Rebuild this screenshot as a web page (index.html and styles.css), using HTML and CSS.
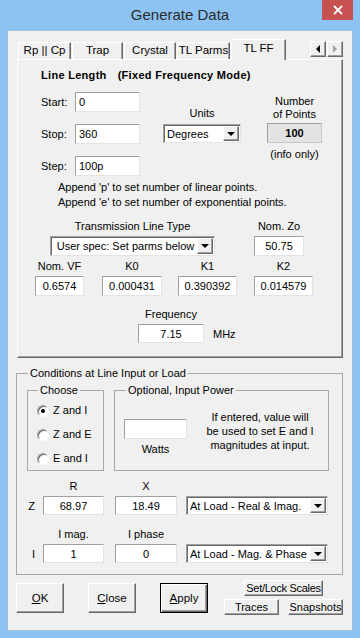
FILE: index.html
```html
<!DOCTYPE html>
<html lang="en">
<head>
    <meta charset="UTF-8">
    <meta name="viewport" content="width=device-width, initial-scale=1.0">
    <title>Generate Data</title>
    <link rel="stylesheet" href="styles.css">
</head>
<body>
    <div class="window">
        <div class="titlebar">
            <div class="title">Generate Data</div>
            <div class="close">
                <svg width="10" height="10" viewBox="0 0 10 10"><path d="M1 1 L9 9 M9 1 L1 9" stroke="#fff" stroke-width="1.8"/></svg>
            </div>
        </div>
        <div class="client">
            <div class="tabs">
                <div class="tab w1">Rp || Cp</div>
                <div class="tab w2">Trap</div>
                <div class="tab w3">Crystal</div>
                <div class="tab w4">TL Parms</div>
                <div class="tab active">TL FF</div>
                <div class="spin">
                    <div class="spin-btn"><span class="tri-left"></span></div>
                    <div class="spin-btn"><span class="tri-right"></span></div>
                </div>
            </div>

            <div class="panel">
                <div class="heading">Line Length<span class="sub">(Fixed Frequency Mode)</span></div>
                <div class="range">
                    <div class="fields">
                        <div class="field"><label>Start:</label><input class="tb" value="0"></div>
                        <div class="field"><label>Stop:</label><input class="tb" value="360"></div>
                        <div class="field"><label>Step:</label><input class="tb" value="100p"></div>
                    </div>
                    <div class="units">
                        <div class="cap">Units</div>
                        <div class="combo units-combo"><span class="combo-val">Degrees</span><span class="combo-btn"><span class="tri-down"></span></span></div>
                    </div>
                    <div class="npoints">
                        <div class="cap">Number<br>of Points</div>
                        <div class="count">100</div>
                        <div class="info">(info only)</div>
                    </div>
                </div>
                <div class="notes">Append 'p' to set number of linear points.<br>Append 'e' to set number of exponential points.</div>
                <div class="tl-row">
                    <div class="tl-type">
                        <div class="cap">Transmission Line Type</div>
                        <div class="combo"><span class="combo-val centered">User spec: Set parms below</span><span class="combo-btn"><span class="tri-down"></span></span></div>
                    </div>
                    <div class="zo">
                        <div class="cap">Nom. Zo</div>
                        <input class="tb num" value="50.75">
                    </div>
                </div>
                <div class="k-row">
                    <div class="kcol vf"><div class="cap">Nom. VF</div><input class="tb num" value="0.6574"></div>
                    <div class="kcol k0"><div class="cap">K0</div><input class="tb num" value="0.000431"></div>
                    <div class="kcol k1"><div class="cap">K1</div><input class="tb num" value="0.390392"></div>
                    <div class="kcol k2"><div class="cap">K2</div><input class="tb num" value="0.014579"></div>
                </div>
                <div class="freq">
                    <div class="cap freq-cap">Frequency</div>
                    <div class="freq-line"><input class="tb num" value="7.15"><span class="unit">MHz</span></div>
                </div>
            </div>

            <fieldset class="group conditions">
                <legend>Conditions at Line Input or Load</legend>
                <div class="cond-inner">
                    <div class="subgroups">
                        <fieldset class="group choose">
                            <legend>Choose</legend>
                            <div class="choose-inner">
                                <div class="radio-row"><span class="radio on"></span>Z and I</div>
                                <div class="radio-row"><span class="radio"></span>Z and E</div>
                                <div class="radio-row"><span class="radio"></span>E and I</div>
                            </div>
                        </fieldset>
                        <fieldset class="group optional">
                            <legend>Optional, Input Power</legend>
                            <div class="optional-inner">
                                <div class="watts">
                                    <input class="tb num" value="">
                                    <div class="cap">Watts</div>
                                </div>
                                <div class="hint">If entered, value will<br>be used to set E and I<br>magnitudes at input.</div>
                            </div>
                        </fieldset>
                    </div>
                    <div class="pair-caps first">
                        <span class="letter"></span><span class="pc c1">R</span><span class="pc c2">X</span>
                    </div>
                    <div class="pair">
                        <span class="letter">Z</span>
                        <input class="tb num c1" value="68.97">
                        <input class="tb num c2" value="18.49">
                        <div class="combo c3"><span class="combo-val">At Load - Real &amp; Imag.</span><span class="combo-btn"><span class="tri-down"></span></span></div>
                    </div>
                    <div class="pair-caps">
                        <span class="letter"></span><span class="pc c1">I mag.</span><span class="pc c2">I phase</span>
                    </div>
                    <div class="pair">
                        <span class="letter">I</span>
                        <input class="tb num c1" value="1">
                        <input class="tb num c2" value="0">
                        <div class="combo c3"><span class="combo-val">At Load - Mag. &amp; Phase</span><span class="combo-btn"><span class="tri-down"></span></span></div>
                    </div>
                </div>
            </fieldset>

            <div class="buttons">
                <div class="btn big"><u>O</u>K</div>
                <div class="btn big"><u>C</u>lose</div>
                <div class="btn big default"><u>A</u>pply</div>
                <div class="side">
                    <div class="btn small scales">Set/Lock Scales</div>
                    <div class="side-row">
                        <div class="btn small half">Traces</div>
                        <div class="btn small half">Snapshots</div>
                    </div>
                </div>
            </div>
        </div>
    </div>
</body>
</html>
```

FILE: styles.css
```css
* {
    box-sizing: border-box;
}
body {
    margin: 0;
    background-color: #8cc3f3;
    font-family: 'Liberation Sans', Arial, sans-serif;
    font-size: 11px;
    color: #000;
}
.window {
    width: 360px;
    height: 638px;
    display: flex;
    flex-direction: column;
}
.titlebar {
    height: 31px;
    display: grid;
    grid-template-columns: 1fr auto 1fr;
    align-items: start;
}
.title {
    grid-column: 2;
    font-size: 15px;
    line-height: 18px;
    padding-top: 6px;
    color: #2b2b2b;
}
.close {
    grid-column: 3;
    justify-self: end;
    margin-right: 7px;
    width: 31px;
    height: 20px;
    background-color: #c75050;
    display: flex;
    align-items: center;
    justify-content: center;
}
.client {
    margin: 0 8px 8px;
    flex: 1;
    background-color: #f0f0f0;
    box-shadow: 0 0 0 1px #a3c2df;
}

/* tabs */
.tabs {
    height: 28px;
    display: flex;
    align-items: flex-end;
    padding: 0 9px 0 10px;
}
.tab {
    height: 17px;
    margin-right: 1px;
    background-color: #f0f0f0;
    border-top: 1px solid #fff;
    border-left: 1px solid #fff;
    border-right: 1px solid #696969;
    box-shadow: inset -1px 0 0 #a0a0a0;
    text-align: center;
    line-height: 15px;
    font-size: 11.5px;
}
.w1 { width: 53px; }
.w2 { width: 51px; }
.w3 { width: 52px; }
.w4 { width: 53px; }
.tab.active {
    width: 55px;
    height: 21px;
    margin-right: 0;
    margin-bottom: -1px;
    position: relative;
    z-index: 1;
    line-height: 16px;
}
.spin {
    margin-left: auto;
    margin-bottom: 2px;
    display: flex;
}
.spin-btn {
    width: 16px;
    height: 16px;
    margin-left: 1px;
    background-color: #f0f0f0;
    border: 1px solid;
    border-color: #fff #696969 #696969 #fff;
    box-shadow: inset -1px -1px 0 #a0a0a0;
    display: flex;
    align-items: center;
    justify-content: center;
}
.tri-left {
    width: 0;
    height: 0;
    border-top: 4px solid transparent;
    border-bottom: 4px solid transparent;
    border-right: 4px solid #000;
}
.tri-right {
    width: 0;
    height: 0;
    border-top: 4px solid transparent;
    border-bottom: 4px solid transparent;
    border-left: 4px solid #a0a0a0;
}
.tri-down {
    width: 0;
    height: 0;
    border-left: 4px solid transparent;
    border-right: 4px solid transparent;
    border-top: 4px solid #000;
}

/* main panel */
.panel {
    margin: 0 9px;
    height: 299px;
    padding-top: 8px;
    border: 1px solid;
    border-color: #fff #696969 #696969 #fff;
    box-shadow: inset -1px -1px 0 #a0a0a0;
}
.heading {
    margin-left: 23px;
    line-height: 14px;
    font-weight: bold;
    letter-spacing: 0.3px;
}
.heading .sub {
    margin-left: 11px;
}
.cap {
    line-height: 13px;
    text-align: center;
}
.tb {
    font: inherit;
    color: #000;
    height: 20px;
    padding: 0 3px;
    background-color: #fff;
    border: 1px solid;
    border-color: #a0a0a0 #e3e3e3 #e3e3e3 #a0a0a0;
    outline: none;
}
.tb.num {
    text-align: center;
}
.range {
    margin: 10px 0 0 23px;
    display: flex;
}
.fields {
    display: flex;
    flex-direction: column;
    gap: 12px;
}
.field {
    display: flex;
    align-items: center;
}
.field label {
    width: 34px;
}
.field .tb {
    width: 65px;
}
.units {
    margin-left: 23px;
    padding-top: 15px;
    width: 78px;
}
.units .cap {
    margin-bottom: 4px;
}
.combo {
    height: 20px;
    display: flex;
    background-color: #fff;
    border: 1px solid;
    border-color: #a0a0a0 #e3e3e3 #e3e3e3 #a0a0a0;
    box-shadow: inset 1px 1px 0 #696969;
}
.units-combo {
    height: 19px;
}
.combo-val {
    flex: 1;
    padding-left: 3px;
    display: flex;
    align-items: center;
    white-space: nowrap;
    overflow: hidden;
}
.combo-val.centered {
    justify-content: center;
}
.combo-btn {
    width: 16px;
    margin: 1px 1px 1px 0;
    background-color: #f0f0f0;
    border: 1px solid;
    border-color: #fff #696969 #696969 #fff;
    box-shadow: inset -1px -1px 0 #a0a0a0;
    display: flex;
    align-items: center;
    justify-content: center;
}
.npoints {
    margin-left: 26px;
    padding-top: 3px;
    width: 55px;
}
.count {
    margin-top: 2px;
    height: 20px;
    background-color: #e3e3e3;
    border: 1px solid;
    border-color: #a0a0a0 #c8c8c8 #c8c8c8 #a0a0a0;
    font-weight: bold;
    text-align: center;
    line-height: 18px;
}
.info {
    margin-top: 5px;
    line-height: 13px;
    text-align: center;
    white-space: nowrap;
}
.notes {
    margin: 4px 0 0 40px;
    line-height: 15px;
}
.tl-row {
    margin: 10px 0 0 32px;
    display: flex;
}
.tl-row .cap,
.k-row .cap,
.freq-cap {
    margin-bottom: 3px;
}
.tl-type {
    width: 165px;
}
.zo {
    margin-left: 39px;
    width: 50px;
}
.zo .tb {
    width: 50px;
}
.k-row {
    margin-top: 4px;
    display: flex;
}
.kcol .tb {
    width: 100%;
}
.vf { margin-left: 17px; width: 49px; }
.k0 { margin-left: 18px; width: 60px; }
.k1 { margin-left: 16px; width: 59px; }
.k2 { margin-left: 17px; width: 59px; }
.freq {
    margin: 12px 0 0 120px;
}
.freq-cap {
    width: 66px;
}
.freq-line {
    display: flex;
    align-items: center;
}
.freq-line .tb {
    width: 66px;
    height: 19px;
}
.unit {
    margin-left: 9px;
}

/* group boxes */
.group {
    margin: 0;
    padding: 0;
    min-width: 0;
    border: 1px solid #a8a8a8;
}
.group legend {
    padding: 0 2px;
    line-height: 12px;
}
.conditions {
    margin: 9px 0 0 8px;
    width: 327px;
    height: 208px;
}
.conditions > legend {
    margin-left: 11px;
}
.cond-inner {
    padding-left: 10px;
}
.subgroups {
    margin-top: 5px;
    display: flex;
}
.choose {
    width: 77px;
    height: 87px;
}
.choose > legend {
    margin-left: 10px;
}
.choose-inner {
    padding: 8px 0 0 9px;
    display: flex;
    flex-direction: column;
    gap: 11px;
}
.radio-row {
    display: flex;
    align-items: center;
    line-height: 13px;
}
.radio {
    width: 12px;
    height: 12px;
    margin-right: 4px;
    border-radius: 50%;
    background-color: #fff;
    border: 1px solid;
    border-color: #a0a0a0 #fff #fff #a0a0a0;
    box-shadow: inset 1px 1px 0 #696969;
    display: flex;
    align-items: center;
    justify-content: center;
}
.radio.on::after {
    content: '';
    width: 4px;
    height: 4px;
    border-radius: 50%;
    background-color: #000;
}
.optional {
    margin-left: 10px;
    width: 215px;
    height: 87px;
}
.optional > legend {
    margin-left: 11px;
}
.optional-inner {
    padding-left: 9px;
    display: flex;
}
.watts {
    margin-top: 23px;
    width: 63px;
}
.watts .tb {
    width: 63px;
}
.watts .cap {
    margin-top: 4px;
}
.hint {
    margin: 14px 0 0 12px;
    width: 122px;
    line-height: 14px;
    text-align: center;
    white-space: nowrap;
}
.pair-caps {
    margin-top: 13px;
    display: flex;
    line-height: 13px;
}
.pair-caps.first {
    margin-top: 9px;
}
.pair {
    margin-top: 3px;
    display: flex;
    align-items: center;
}
.letter {
    width: 16px;
    padding-right: 8px;
    text-align: right;
}
.pc {
    text-align: center;
}
.c1 { width: 61px; }
.c2 { width: 62px; margin-left: 11px; }
.c3 { width: 142px; margin-left: 9px; }
.pair .tb,
.pair .combo {
    height: 19px;
}

/* buttons */
.buttons {
    margin-top: 5px;
    padding: 0 9px 0 8px;
    display: flex;
    align-items: flex-start;
}
.btn {
    background-color: #f0f0f0;
    border: 1px solid;
    border-color: #fff #696969 #696969 #fff;
    box-shadow: inset -1px -1px 0 #a0a0a0;
    display: flex;
    align-items: center;
    justify-content: center;
    white-space: nowrap;
}
.btn.big {
    margin-top: 3px;
    margin-right: 24px;
    width: 48px;
    height: 30px;
    font-size: 11.5px;
}
.btn.default {
    margin-right: 0;
    border-color: #000;
    box-shadow: inset 1px 1px 0 #fff, inset -1px -1px 0 #696969, inset -2px -2px 0 #a0a0a0;
}
.side {
    margin-left: auto;
    display: flex;
    flex-direction: column;
    align-items: center;
}
.btn.small {
    height: 16px;
}
.scales {
    width: 79px;
    letter-spacing: -0.3px;
}
.side-row {
    margin-top: 3px;
    display: flex;
    gap: 9px;
}
.half {
    width: 55px;
}
```
